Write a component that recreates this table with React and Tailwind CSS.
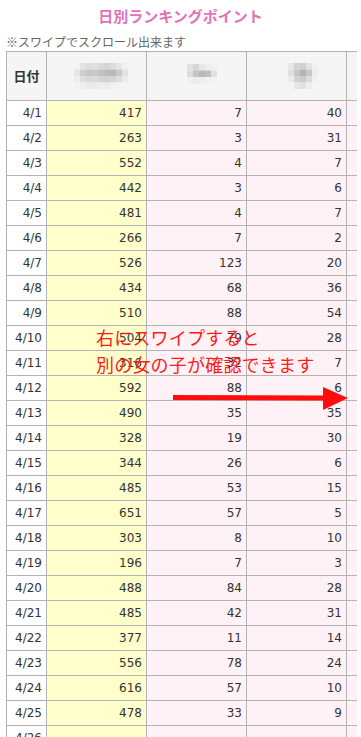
import React from 'react';

const rows = [
  ['4/1', 417, 7, 40],
  ['4/2', 263, 3, 31],
  ['4/3', 552, 4, 7],
  ['4/4', 442, 3, 6],
  ['4/5', 481, 4, 7],
  ['4/6', 266, 7, 2],
  ['4/7', 526, 123, 20],
  ['4/8', 434, 68, 36],
  ['4/9', 510, 88, 54],
  ['4/10', 504, 79, 28],
  ['4/11', 316, 32, 7],
  ['4/12', 592, 88, 6],
  ['4/13', 490, 35, 35],
  ['4/14', 328, 19, 30],
  ['4/15', 344, 26, 6],
  ['4/16', 485, 53, 15],
  ['4/17', 651, 57, 5],
  ['4/18', 303, 8, 10],
  ['4/19', 196, 7, 3],
  ['4/20', 488, 84, 28],
  ['4/21', 485, 42, 31],
  ['4/22', 377, 11, 14],
  ['4/23', 556, 78, 24],
  ['4/24', 616, 57, 10],
  ['4/25', 478, 33, 9],
  ['4/26', '', '', ''],
];

// pixelated (blurred) name images in the header
const mosaics = [
  [
    ['#f2f2f2', '#e4e4e4', '#dedede', '#e0e0e0', '#dadada', '#d6d6d6', '#dcdcdc', '#e6e6e6', '#f0f0f0'],
    ['#e6e6e6', '#cfcfcf', '#c6c6c6', '#c8c8c8', '#c2c2c2', '#bcbcbc', '#b8b8b8', '#cacaca', '#e2e2e2'],
    ['#eeeeee', '#dddddd', '#d8d8d8', '#dadada', '#d4d4d4', '#d2d2d2', '#d6d6d6', '#dedede', '#ececec'],
    ['#f4f4f4', '#eeeeee', '#ececec', '#eaeaea', '#eeeeee', '#ececec', '#f0f0f0', '#f2f2f2', '#f4f4f4'],
  ],
  [
    ['#e2e2e2', '#d6d6d6', '#e6e6e6', '#eeeeee', '#f2f2f2'],
    ['#dcdcdc', '#c4c4c4', '#b8b8b8', '#c0c0c0', '#e2e2e2'],
    ['#f0f0f0', '#ececec', '#eeeeee', '#f2f2f2', '#f4f4f4'],
  ],
  [
    ['#e8e8e8', '#d4d4d4', '#d0d0d0', '#e4e4e4', '#f2f2f2'],
    ['#e0e0e0', '#c6c6c6', '#b4b4b4', '#c8c8c8', '#ececec'],
    ['#eaeaea', '#d2d2d2', '#cccccc', '#dcdcdc', '#f0f0f0'],
    ['#f4f4f4', '#e6e6e6', '#e2e2e2', '#eeeeee', '#f4f4f4'],
  ],
];

const Mosaic = ({ grid }) => (
  <svg width={grid[0].length * 6} height={grid.length * 6.5} className="block">
    {grid.map((r, y) =>
      r.map((c, x) => <rect key={`${x}-${y}`} x={x * 6} y={y * 6.5} width="6" height="6.5" fill={c} />)
    )}
  </svg>
);

const cell = 'border border-[#b3b3b3] h-[25px] px-[4px] text-right align-middle leading-none';

const App = () => {
  return (
    <div className="relative w-[361px] h-[737px] overflow-hidden bg-white font-['Noto_Sans_CJK_JP',sans-serif] text-[#333]">
      <div className="h-[32px] flex items-center justify-center text-[15px] font-bold text-[#e271b8]">
        日別ランキングポイント
      </div>
      <div className="h-[19px] pl-[6px] text-[12px] leading-[19px] text-[#666]">※スワイプでスクロール出来ます</div>

      <div className="ml-[6px] w-[351px] overflow-hidden">
        <table className="table-fixed border-collapse w-[441px] font-['DejaVu_Sans','Noto_Sans_CJK_JP',sans-serif] text-[12px]">
          <colgroup>
            <col className="w-[40px]" />
            <col className="w-[100px]" />
            <col className="w-[100px]" />
            <col className="w-[100px]" />
            <col className="w-[100px]" />
          </colgroup>
          <thead>
            <tr className="bg-[#f5f5f5]">
              <th className="border border-[#b3b3b3] h-[49px] text-center text-[13px] font-bold font-['Noto_Sans_CJK_JP',sans-serif]">
                日付
              </th>
              <th className="border border-[#b3b3b3]">
                <div className="flex justify-center ml-[8px]">
                  <Mosaic grid={mosaics[0]} />
                </div>
              </th>
              <th className="border border-[#b3b3b3]">
                <div className="flex justify-center ml-[10px] -mt-[4px]">
                  <Mosaic grid={mosaics[1]} />
                </div>
              </th>
              <th className="border border-[#b3b3b3]">
                <div className="flex justify-center ml-[12px]">
                  <Mosaic grid={mosaics[2]} />
                </div>
              </th>
              <th className="border border-[#b3b3b3]"></th>
            </tr>
          </thead>
          <tbody>
            {rows.map(([d, a, b, c]) => (
              <tr key={d}>
                <td className={`${cell} bg-white`}>{d}</td>
                <td className={`${cell} bg-[#ffffcc]`}>{a}</td>
                <td className={`${cell} bg-[#fff2f6]`}>{b}</td>
                <td className={`${cell} bg-[#fff2f6]`}>{c}</td>
                <td className={`${cell} bg-[#fff2f6]`}></td>
              </tr>
            ))}
          </tbody>
        </table>
      </div>

      <div className="absolute left-[96px] top-[324px] text-[18px] leading-[27px] text-[#ff1a1a] tracking-[0.2px]">
        <p>右にスワイプすると</p>
        <p>別の女の子が確認できます</p>
      </div>

      <svg className="absolute left-[170px] top-[384px]" width="182" height="30" viewBox="0 0 182 30">
        <line x1="3" y1="13.5" x2="156" y2="14" stroke="#ff0d0d" strokeWidth="5" />
        <polygon points="153,3 178,14 153,26" fill="#ff0d0d" />
      </svg>
    </div>
  );
};

export default App;
